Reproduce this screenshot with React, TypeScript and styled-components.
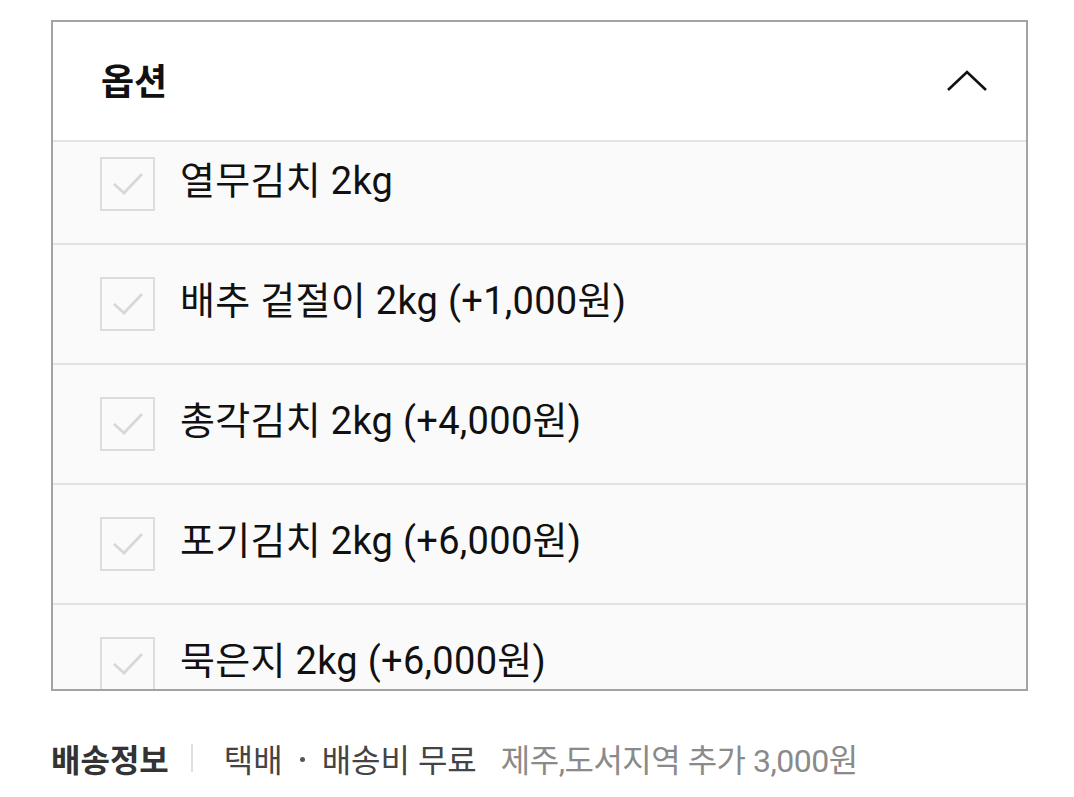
import React from 'react';
import styled, { createGlobalStyle } from 'styled-components';

const GlobalStyle = createGlobalStyle`
    body {
        margin: 0;
        background: #ffffff;
        font-family: Roboto, "Noto Sans CJK KR", sans-serif;
    }
`;

const Page = styled.div`
    padding: 20px 45px 0 51px;
`;

const OptionBox = styled.section`
    width: 977px;
    box-sizing: border-box;
    border: 2px solid #a3a3a3;
    background: #fafafa;
`;

const Header = styled.div`
    height: 118px;
    display: flex;
    align-items: center;
    justify-content: space-between;
    padding: 0 38px 0 48px;
    background: #ffffff;
    border-bottom: 2px solid #e2e2e2;
`;

const Title = styled.h2`
    margin: 0 0 4px;
    font-size: 36px;
    font-weight: 700;
    color: #111111;
`;

const OptionList = styled.ul`
    list-style: none;
    margin: 0;
    padding: 0;
    height: 547px;
    overflow: hidden;
`;

const OptionRow = styled.li<{ first?: boolean }>`
    height: 118px;
    display: flex;
    align-items: center;
    gap: 25px;
    padding-left: 47px;
    border-bottom: 2px solid #e2e2e2;
    margin-top: ${({ first }) => (first ? '-17px' : '0')};
`;

const CheckBox = styled.span`
    width: 55px;
    height: 54px;
    box-sizing: border-box;
    border: 2px solid #dcdcdc;
    background: #fafafa;
    display: flex;
    align-items: center;
    justify-content: center;
    flex-shrink: 0;
`;

const Label = styled.span`
    font-size: 38px;
    line-height: 1;
    letter-spacing: 0.3px;
    color: #111111;
    margin-bottom: 6px;
`;

const DeliveryInfo = styled.div`
    display: flex;
    align-items: center;
    height: 134px;
    font-size: 32px;
    color: #444444;
`;

const DeliveryTitle = styled.span`
    font-weight: 700;
    color: #333333;
`;

const Divider = styled.span`
    width: 2px;
    height: 28px;
    background: #e0e0e0;
    margin: 0 31px 0 22px;
`;

const Dot = styled.span`
    width: 5px;
    height: 5px;
    border-radius: 50%;
    background: #555555;
    margin: 2px 17px 0 17px;
`;

const Extra = styled.span`
    color: #8a8a8a;
    margin-left: 24px;
    letter-spacing: -0.5px;
`;

const options = [
    '열무김치 2kg',
    '배추 겉절이 2kg (+1,000원)',
    '총각김치 2kg (+4,000원)',
    '포기김치 2kg (+6,000원)',
    '묵은지 2kg (+6,000원)',
];

const CheckIcon = () => (
    <svg width="34" height="26" viewBox="0 0 34 26" fill="none">
        <path d="M3 13 L13 22 L31 3" stroke="#d8d8d8" strokeWidth="2.8" />
    </svg>
);

const ChevronUp = () => (
    <svg width="42" height="24" viewBox="0 0 42 24" fill="none">
        <path d="M2 21 L21 3 L40 21" stroke="#111111" strokeWidth="2.6" />
    </svg>
);

export default function App() {
    return (
        <Page>
            <GlobalStyle />
            <OptionBox>
                <Header>
                    <Title>옵션</Title>
                    <ChevronUp />
                </Header>
                <OptionList>
                    {options.map((option, i) => (
                        <OptionRow key={option} first={i === 0}>
                            <CheckBox>
                                <CheckIcon />
                            </CheckBox>
                            <Label>{option}</Label>
                        </OptionRow>
                    ))}
                </OptionList>
            </OptionBox>
            <DeliveryInfo>
                <DeliveryTitle>배송정보</DeliveryTitle>
                <Divider />
                <span>택배</span>
                <Dot />
                <span>배송비 무료</span>
                <Extra>제주,도서지역 추가 3,000원</Extra>
            </DeliveryInfo>
        </Page>
    );
}
